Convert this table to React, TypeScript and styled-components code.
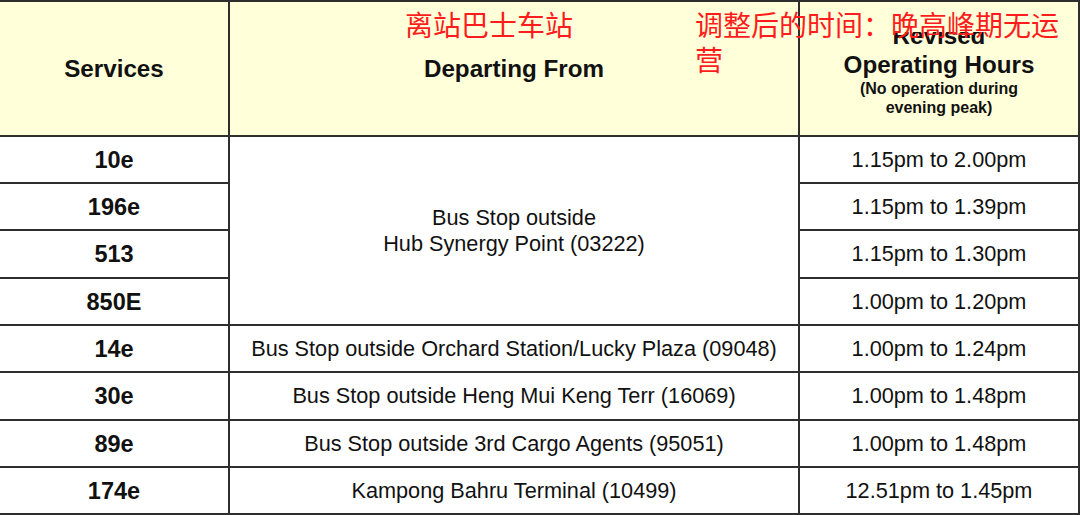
import React from 'react';
import styled, { createGlobalStyle } from 'styled-components';

const GlobalStyle = createGlobalStyle`
    html, body {
        margin: 0;
        padding: 0;
        background: #ffffff;
        overflow: hidden;
    }
`;

const Page = styled.div`
    position: relative;
    width: 1080px;
    height: 515px;
    font-family: 'Liberation Sans', Arial, sans-serif;
    color: #111111;
`;

const Table = styled.div`
    display: grid;
    grid-template-columns: 228px 568px 278px;
    grid-template-rows: 133px 45px 45px 46px 45px 45px 46px 45px 45px;
    gap: 2px;
    padding: 2px 2px 2px 0;
    background: #2e2e2e;
    width: 1080px;
    box-sizing: border-box;
`;

const Cell = styled.div<{ $span?: number }>`
    display: flex;
    align-items: center;
    justify-content: center;
    text-align: center;
    background: #ffffff;
    font-size: 21.7px;
    line-height: 26px;
    ${(p) => (p.$span ? `grid-row: span ${p.$span};` : '')}
`;

const HeaderCell = styled(Cell)`
    position: relative;
    flex-direction: column;
    background: #ffffd9;
    font-size: 24.2px;
    font-weight: bold;
    line-height: 29px;
`;

const HoursHeader = styled(HeaderCell)`
    &::before {
        content: '';
        position: absolute;
        top: 0;
        left: 0;
        right: 20px;
        height: 30px;
        background: #ffffd9;
    }
`;

const SubNote = styled.div`
    font-size: 16px;
    line-height: 19px;
`;

const ServiceCell = styled(Cell)`
    font-size: 23.5px;
    font-weight: bold;
`;

const Note = styled.div<{ $left: number; $width: number }>`
    position: absolute;
    top: 7px;
    left: ${(p) => p.$left}px;
    width: ${(p) => p.$width}px;
    font-family: 'Noto Sans CJK SC', 'Noto Sans', sans-serif;
    font-size: 28px;
    line-height: 35px;
    color: #ff1c1c;
`;

const stops = [
    { service: '10e', hours: '1.15pm to 2.00pm' },
    { service: '196e', hours: '1.15pm to 1.39pm' },
    { service: '513', hours: '1.15pm to 1.30pm' },
    { service: '850E', hours: '1.00pm to 1.20pm' },
];

const others = [
    { service: '14e', from: 'Bus Stop outside Orchard Station/Lucky Plaza (09048)', hours: '1.00pm to 1.24pm' },
    { service: '30e', from: 'Bus Stop outside Heng Mui Keng Terr (16069)', hours: '1.00pm to 1.48pm' },
    { service: '89e', from: 'Bus Stop outside 3rd Cargo Agents (95051)', hours: '1.00pm to 1.48pm' },
    { service: '174e', from: 'Kampong Bahru Terminal (10499)', hours: '12.51pm to 1.45pm' },
];

export default function App() {
    return (
        <Page>
            <GlobalStyle />
            <Table>
                <HeaderCell>Services</HeaderCell>
                <HeaderCell>Departing From</HeaderCell>
                <HoursHeader>
                    <div>Revised</div>
                    <div>Operating Hours</div>
                    <SubNote>(No operation during</SubNote>
                    <SubNote>evening peak)</SubNote>
                </HoursHeader>

                {stops.map((s, idx) => (
                    <React.Fragment key={s.service}>
                        <ServiceCell>{s.service}</ServiceCell>
                        {idx === 0 && (
                            <Cell $span={4}>
                                Bus Stop outside
                                <br />
                                Hub Synergy Point (03222)
                            </Cell>
                        )}
                        <Cell>{s.hours}</Cell>
                    </React.Fragment>
                ))}

                {others.map((s) => (
                    <React.Fragment key={s.service}>
                        <ServiceCell>{s.service}</ServiceCell>
                        <Cell>{s.from}</Cell>
                        <Cell>{s.hours}</Cell>
                    </React.Fragment>
                ))}
            </Table>

            <Note $left={405} $width={200}>离站巴士车站</Note>
            <Note $left={695} $width={370}>调整后的时间：晚高峰期无运营</Note>
        </Page>
    );
}
